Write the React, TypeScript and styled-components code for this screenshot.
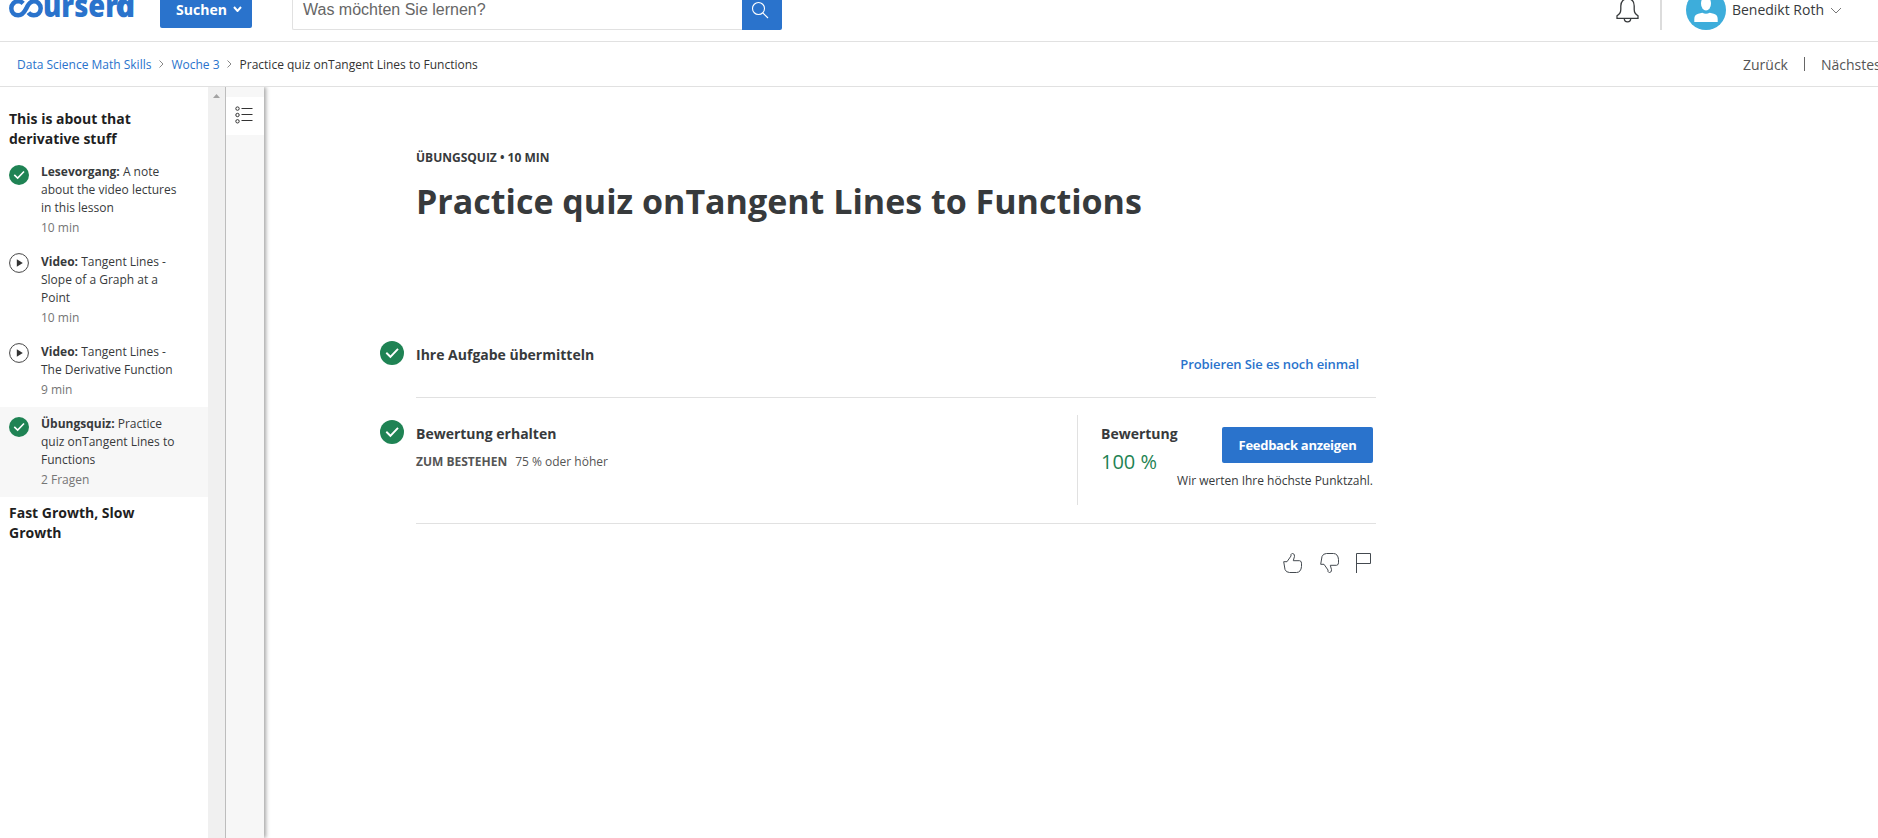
import React from "react";
import styled, { createGlobalStyle } from "styled-components";

const blue = "#2a73cc";
const line = "#e1e1e1";
const green = "#1f8354";
const ink = "#373a3c";

const GlobalStyle = createGlobalStyle`
  * { box-sizing: border-box; }
  html, body { margin: 0; padding: 0; height: 100%; overflow: hidden; background: #fff; }
  body { font-family: "Open Sans", Arial, sans-serif; font-size: 14px; color: ${ink}; }
  #root { height: 100%; }
  button, a { font-family: inherit; }
  svg { display: block; flex: none; }
`;

const Page = styled.div`
  display: flex;
  flex-direction: column;
  height: 838px;
  overflow: hidden;
`;

const Header = styled.header`
  display: flex;
  align-items: flex-end;
  flex: none;
  height: 42px;
  padding: 0 36px 11px 9px;
  overflow: hidden;
  border-bottom: 1px solid ${line};
`;

const Logo = styled.div`
  display: flex;
  align-items: flex-end;
  width: 151px;
  height: 41px;
  margin-bottom: -11px;
`;

const MenuButton = styled.button`
  display: flex;
  align-items: center;
  justify-content: center;
  gap: 6px;
  width: 92px;
  height: 36px;
  margin: 0 40px 2px 0;
  padding: 0 0 2px 6px;
  border: 0;
  border-radius: 2px;
  background: ${blue};
  color: #fff;
  font-size: 14px;
  font-weight: 700;
`;

const SearchForm = styled.form`
  display: flex;
  width: 490px;
  height: 40px;
`;

const SearchField = styled.div`
  flex: 1;
  padding: 0 10px;
  border: 1px solid ${line};
  border-right: 0;
  border-radius: 2px 0 0 2px;
  color: #666;
  font: 16px/38px "Liberation Sans", Arial, sans-serif;
`;

const SearchButton = styled.button`
  display: flex;
  align-items: center;
  justify-content: center;
  width: 40px;
  padding: 0 4px 0 0;
  border: 0;
  border-radius: 0 2px 2px 0;
  background: ${blue};
`;

const Account = styled.div`
  display: flex;
  align-items: center;
  height: 40px;
  margin-left: auto;
`;

const AccountDivider = styled.span`
  width: 2px;
  height: 40px;
  margin: 0 24px 0 21px;
  background: #dcdcdc;
`;

const UserName = styled.span`
  margin: 0 6px 0 6px;
  line-height: 20px;
`;

const SubBar = styled.nav`
  display: flex;
  align-items: center;
  flex: none;
  height: 45px;
  padding-left: 17px;
  border-bottom: 1px solid ${line};
  overflow: hidden;
`;

const Crumbs = styled.div`
  display: flex;
  align-items: center;
  gap: 7.5px;
  font-size: 12px;
  white-space: nowrap;
`;

const Crumb = styled.span<{ $current?: boolean }>`
  color: ${(p) => (p.$current ? "#333" : blue)};
`;

const Pager = styled.div`
  display: flex;
  align-items: center;
  width: 135px;
  margin-left: auto;
  color: #555;
  font-size: 14px;
  white-space: nowrap;
`;

const PagerDivider = styled.span`
  flex: none;
  width: 1px;
  height: 14px;
  margin: 0 16px;
  background: #666;
`;

const Body = styled.div`
  display: flex;
  flex: 1;
  min-height: 0;
`;

const Sidebar = styled.aside`
  flex: none;
  width: 208px;
  padding-top: 16px;
`;

const LessonTitle = styled.h3`
  margin: 0;
  padding: 6px 40px 6px 9px;
  color: #1f1f1f;
  font-size: 14px;
  font-weight: 700;
  line-height: 20px;
`;

const LessonItem = styled.div<{ $active?: boolean }>`
  display: flex;
  gap: 12px;
  padding: 8px 28px 8px 9px;
  background: ${(p) => (p.$active ? "#f7f7f7" : "transparent")};
`;

const ItemIcon = styled.span<{ $done?: boolean }>`
  padding-top: ${(p) => (p.$done ? 2 : 0)}px;
`;

const ItemText = styled.div`
  font-size: 12px;
  line-height: 18px;
`;

const ItemMeta = styled.div`
  margin: 1px 0 -1px;
  color: #757575;
  line-height: 20px;
`;

const ScrollTrack = styled.div`
  display: flex;
  justify-content: center;
  flex: none;
  width: 17px;
  padding-top: 7px;
  background: #f0f0f0;
`;

const Rail = styled.div`
  z-index: 1;
  flex: none;
  width: 39px;
  padding-top: 10px;
  border-left: 1px solid #bdbdbd;
  background: #f7f7f7;
  box-shadow: 2px 0 4px rgba(0, 0, 0, 0.35);
  clip-path: inset(0 -8px 0 0);
`;

const RailButton = styled.button`
  display: flex;
  align-items: center;
  width: 38px;
  height: 38px;
  padding: 0 0 3px 9px;
  border: 0;
  background: #fff;
`;

const Main = styled.main`
  width: 1113px;
  padding: 61px 0 0 116px;
`;

const Eyebrow = styled.div`
  margin-left: 36px;
  font-size: 12px;
  font-weight: 700;
  line-height: 20px;
`;

const Title = styled.h1`
  margin: 10px 0 0 36px;
  font-size: 34px;
  font-weight: 700;
  line-height: 46px;
  white-space: nowrap;
`;

const Step = styled.section<{ $gap: number }>`
  display: flex;
  gap: 12px;
  margin-top: ${(p) => p.$gap}px;
`;

const StepBody = styled.div<{ $height: number }>`
  display: flex;
  justify-content: space-between;
  width: 960px;
  height: ${(p) => p.$height}px;
  border-bottom: 1px solid ${line};
`;

const StepTitle = styled.h4`
  margin: 0;
  padding-top: 4px;
  font-size: 14px;
  font-weight: 700;
  line-height: 20px;
`;

const Requirement = styled.div`
  display: flex;
  gap: 8px;
  margin-top: 9px;
  color: #555;
  font-size: 12px;
  line-height: 18px;

  strong { font-weight: 700; }
`;

const RetryLink = styled.a`
  margin: 13px 17px 0 0;
  color: ${blue};
  font-size: 13px;
  font-weight: 600;
  letter-spacing: -0.1px;
  line-height: 20px;
`;

const Grade = styled.div`
  display: flex;
  justify-content: space-between;
  width: 299px;
  height: 90px;
  margin-top: -5px;
  padding: 5px 3px 0 23px;
  border-left: 1px solid ${line};
`;

const GradeScore = styled.div`
  width: 76px;
  flex: none;
`;

const GradeValue = styled.div`
  margin-top: 5px;
  color: ${green};
  font-size: 20px;
  line-height: 26px;
  white-space: nowrap;
`;

const GradeAction = styled.div`
  display: flex;
  flex-direction: column;
  align-items: flex-end;
  margin-top: 7px;
  font-size: 12px;
  line-height: 18px;
  white-space: nowrap;
`;

const FeedbackButton = styled.button`
  width: 151px;
  height: 36px;
  margin-bottom: 9px;
  padding: 0;
  border: 0;
  border-radius: 2px;
  background: ${blue};
  color: #fff;
  font-size: 13px;
  font-weight: 700;
  letter-spacing: -0.3px;
`;

const Reactions = styled.div`
  display: flex;
  justify-content: flex-end;
  gap: 17.5px;
  margin-top: 29px;
  padding-right: 6px;
`;

const Check = ({ size }: { size: number }) => (
  <svg width={size} height={size} viewBox="0 0 24 24">
    <circle cx="12" cy="12" r="12" fill={green} />
    <path d="M6.3 11.8l4.1 4L18 7.8" fill="none" stroke="#fff" strokeWidth="1.9" />
  </svg>
);

const Play = () => (
  <svg width="20" height="20" viewBox="0 0 20 20">
    <circle cx="10" cy="10" r="9.4" fill="#fff" stroke="#444" strokeWidth="1" />
    <path d="M7.8 6.2v7.6l6-3.8z" fill="#333" />
  </svg>
);

const Chevron = ({ w, h, color, stroke }: { w: number; h: number; color: string; stroke: number }) => (
  <svg width={w} height={h} viewBox={`0 0 ${w} ${h}`} fill="none" stroke={color} strokeWidth={stroke}>
    <path d={`M1 1L${w / 2} ${h - 1}L${w - 1} 1`} />
  </svg>
);

const CrumbArrow = () => (
  <svg width="5" height="8" viewBox="0 0 5 8" fill="none" stroke="#888" strokeWidth="1">
    <path d="M.5 .5L4 4L.5 7.5" />
  </svg>
);

const CourseraLogo = () => (
  <svg width="130" height="41" viewBox="0 0 130 41" role="img" aria-label="coursera">
    <path
      d="M14.2 3.400C12.900 2.100 11.200 1.300 9.200 1.300C5.300 1.300 2.300 4.400 2.300 8.300C2.300 12.300 5.300 15.300 9.200 15.300C13 15.300 15 12.900 17.100 8.800C19.200 4 21 1.300 24.800 1.300C28.700 1.300 31.700 4.400 31.700 8.300C31.700 12.300 28.700 15.300 24.800 15.300C22.400 15.300 20.600 14.200 19.400 12.600"
      fill="none"
      stroke={blue}
      strokeWidth="4.500"
    />
    <g fill={blue} fontFamily="Open Sans, sans-serif" fontWeight="800" fontSize="32">
      <text x="34" y="17.300" textLength="75" lengthAdjust="spacingAndGlyphs">urser</text>
      <text transform="translate(108 17.300) skewX(12) scale(1.050 1)" x="0" y="0" fontStyle="italic">a</text>
    </g>
  </svg>
);

const Bell = () => (
  <svg width="23" height="26" viewBox="0 0 23 26" fill="none" stroke="#373a3c" strokeWidth="1.300">
    <path d="M1 21.300V18.800Q4.800 16.500 4.800 12.500V9C4.800 4.500 7.500 1.800 11.500 1.800S18.200 4.500 18.200 9v3.500Q18.200 16.500 22 18.800v2.500z" />
    <path d="M8.300 21.500c0 2.300 1.300 3.400 3.200 3.400s3.200-1.100 3.200-3.400" />
  </svg>
);

const Avatar = () => (
  <svg width="40" height="40" viewBox="0 0 40 40">
    <circle cx="20" cy="20" r="20" fill="#3daddb" />
    <ellipse cx="20" cy="13.500" rx="5" ry="7" fill="#fff" />
    <path d="M8.300 32V29c0-3 1.300-4.500 4-5.200l4-1q3.700 2 7.400 0l4 1c2.700.7 4 2.200 4 5.200v3z" fill="#fff" />
  </svg>
);

const thumb =
  "M.7 8.700H4L8 3V1.500Q8.500.5 9.600.5Q11.800.8 11.500 3.300L10.300 7.700H16.500Q18.600 8 18.500 10.200V13.500Q18 19.300 13.500 19.500H6.500Q3 19.400 2 16.500z";

const ThumbUp = () => (
  <svg width="19" height="20" viewBox="0 0 19 20" fill="none" stroke="#444a50" strokeWidth="1">
    <path d={thumb} />
  </svg>
);

const ThumbDown = () => (
  <svg width="19" height="20" viewBox="0 0 19 20" fill="none" stroke="#444a50" strokeWidth="1">
    <path d={thumb} transform="matrix(1 0 0 -1 0 20)" />
  </svg>
);

const Flag = () => (
  <svg width="15" height="20" viewBox="0 0 15 20" fill="none" stroke="#444a50" strokeWidth="1">
    <path d="M.5 20V.5H14.500V10.500H.5" />
  </svg>
);

const ListIcon = () => (
  <svg width="18" height="18" viewBox="0 0 18 18" fill="none" stroke="#333" strokeWidth="1">
    <circle cx="2.500" cy="2.600" r="1.700" />
    <circle cx="2.500" cy="9" r="1.700" />
    <circle cx="2.500" cy="15.300" r="1.700" />
    <path d="M6.500 2.500H17.500M6.500 8.500H17.500M6.500 14.500H17.500" />
  </svg>
);

const lessons = [
  { kind: "Lesevorgang:", title: "A note about the video lectures in this lesson", meta: "10 min", done: true },
  { kind: "Video:", title: "Tangent Lines - Slope of a Graph at a Point", meta: "10 min" },
  { kind: "Video:", title: "Tangent Lines - The Derivative Function", meta: "9 min" },
  { kind: "Übungsquiz:", title: "Practice quiz onTangent Lines to Functions", meta: "2 Fragen", done: true, active: true },
];

export default function App() {
  return (
    <Page>
      <GlobalStyle />
      <Header>
        <Logo>
          <CourseraLogo />
        </Logo>
        <MenuButton>
          Suchen
          <Chevron w={9} h={6} color="#fff" stroke={2} />
        </MenuButton>
        <SearchForm>
          <SearchField>Was möchten Sie lernen?</SearchField>
          <SearchButton type="button" aria-label="Suchen">
            <svg width="18" height="18" viewBox="0 0 18 18" fill="none" stroke="#fff" strokeWidth="1.100">
              <circle cx="7.500" cy="7.500" r="6" />
              <path d="M11.800 11.800L17 17" />
            </svg>
          </SearchButton>
        </SearchForm>
        <Account>
          <Bell />
          <AccountDivider />
          <Avatar />
          <UserName>Benedikt Roth</UserName>
          <Chevron w={12} h={7} color="#777" stroke={1} />
        </Account>
      </Header>
      <SubBar>
        <Crumbs>
          <Crumb>Data Science Math Skills</Crumb>
          <CrumbArrow />
          <Crumb>Woche 3</Crumb>
          <CrumbArrow />
          <Crumb $current>Practice quiz onTangent Lines to Functions</Crumb>
        </Crumbs>
        <Pager>
          <span>Zurück</span>
          <PagerDivider />
          <span>Nächstes</span>
        </Pager>
      </SubBar>
      <Body>
        <Sidebar>
          <LessonTitle>This is about that derivative stuff</LessonTitle>
          {lessons.map((item) => (
            <LessonItem key={item.title} $active={item.active}>
              <ItemIcon $done={item.done}>{item.done ? <Check size={20} /> : <Play />}</ItemIcon>
              <ItemText>
                <strong>{item.kind}</strong> {item.title}
                <ItemMeta>{item.meta}</ItemMeta>
              </ItemText>
            </LessonItem>
          ))}
          <LessonTitle>Fast Growth, Slow Growth</LessonTitle>
        </Sidebar>
        <ScrollTrack>
          <svg width="7" height="4" viewBox="0 0 7 4">
            <path d="M0 4L3.500 0L7 4z" fill="#a3a3a3" />
          </svg>
        </ScrollTrack>
        <Rail>
          <RailButton aria-label="Inhalt">
            <ListIcon />
          </RailButton>
        </Rail>
        <Main>
          <Eyebrow>ÜBUNGSQUIZ • 10 MIN</Eyebrow>
          <Title>Practice quiz onTangent Lines to Functions</Title>
          <Step $gap={117}>
            <Check size={24} />
            <StepBody $height={57}>
              <StepTitle>Ihre Aufgabe übermitteln</StepTitle>
              <RetryLink>Probieren Sie es noch einmal</RetryLink>
            </StepBody>
          </Step>
          <Step $gap={22}>
            <Check size={24} />
            <StepBody $height={104}>
              <div>
                <StepTitle>Bewertung erhalten</StepTitle>
                <Requirement>
                  <strong>ZUM BESTEHEN</strong>
                  <span>75 % oder höher</span>
                </Requirement>
              </div>
              <Grade>
                <GradeScore>
                  <StepTitle>Bewertung</StepTitle>
                  <GradeValue>100 %</GradeValue>
                </GradeScore>
                <GradeAction>
                  <FeedbackButton>Feedback anzeigen</FeedbackButton>
                  Wir werten Ihre höchste Punktzahl.
                </GradeAction>
              </Grade>
            </StepBody>
          </Step>
          <Reactions>
            <ThumbUp />
            <ThumbDown />
            <Flag />
          </Reactions>
        </Main>
      </Body>
    </Page>
  );
}
